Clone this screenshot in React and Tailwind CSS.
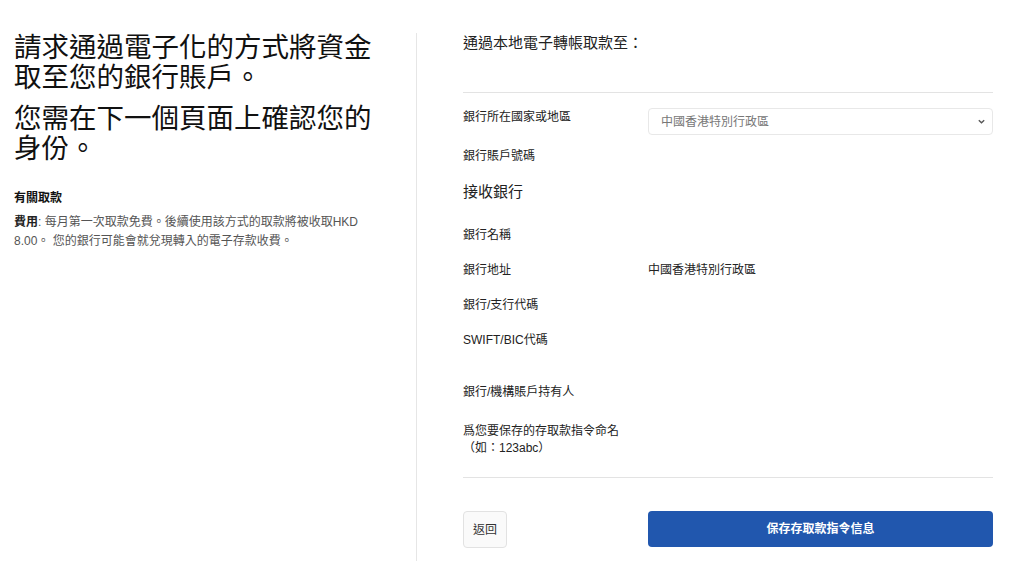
import React from "react";

const FONT = { fontFamily: '"Liberation Sans", "Noto Sans CJK TC", sans-serif' };

function Row({ label, children, className = "" }) {
  return (
    <div className={"flex items-start " + className}>
      <div className="w-[185px] shrink-0 text-[12px] leading-[18px] text-[#222]">{label}</div>
      <div className="flex-1 text-[12px] leading-[18px] text-[#222]">{children}</div>
    </div>
  );
}

export default function App() {
  return (
    <div className="flex w-[1015px] h-[576px] bg-white overflow-hidden" style={FONT}>
      {/* Left column */}
      <div className="w-[416px] shrink-0 pl-[14px] pt-[33px]">
        <h1 className="w-[380px] text-[27.5px] leading-[30px] text-[#111] font-normal">
          請求通過電子化的方式將資金取至您的銀行賬戶。
        </h1>
        <h2 className="w-[380px] mt-[11px] text-[27.5px] leading-[30px] text-[#111] font-normal">
          您需在下一個頁面上確認您的身份。
        </h2>
        <div className="mt-[25px] text-[12px] leading-[18px] font-bold text-[#111]">有關取款</div>
        <p className="mt-[6px] w-[352px] text-[12px] leading-[19px] text-[#555]">
          <span className="font-bold text-[#222]">費用</span>
          <span>: 每月第一次取款免費。後續使用該方式的取款將被收取HKD 8.00。 您的銀行可能會就兌現轉入的電子存款收費。</span>
        </p>
      </div>

      {/* Right column */}
      <div className="mt-[33px] h-[528px] flex-1 border-l border-[#e6e6e6] pl-[46px] pr-[22px] flex flex-col">
        <div className="text-[15px] leading-[20px] text-[#222]">通過本地電子轉帳取款至：</div>
        <div className="mt-[39px] border-t border-[#e3e3e3]" />

        <div className="mt-[15px] flex items-start">
          <div className="w-[185px] shrink-0 text-[12px] leading-[18px] text-[#222]">銀行所在國家或地區</div>
          <div className="flex-1 h-[27px] rounded-[4px] border border-[#e8e8e8] bg-white flex items-center justify-between pl-[12px] pr-[6px]">
            <span className="text-[12px] text-[#777]">中國香港特別行政區</span>
            <svg width="9" height="9" viewBox="0 0 10 10" className="text-[#555]">
              <path d="M2 3.5 L5 6.5 L8 3.5" fill="none" stroke="currentColor" strokeWidth="1.5" />
            </svg>
          </div>
        </div>

        <Row label="銀行賬戶號碼" className="mt-[12px]" />

        <div className="mt-[17px] text-[15px] leading-[20px] text-[#222]">接收銀行</div>

        <Row label="銀行名稱" className="mt-[24px]" />
        <Row label="銀行地址" className="mt-[17px]">中國香港特別行政區</Row>
        <Row label="銀行/支行代碼" className="mt-[17px]" />
        <Row label="SWIFT/BIC代碼" className="mt-[17px]" />
        <Row label="銀行/機構賬戶持有人" className="mt-[34px]" />

        <div className="mt-[22px] text-[12px] leading-[17px] text-[#222]">
          <div>爲您要保存的存取款指令命名</div>
          <div>（如：123abc）</div>
        </div>

        <div className="mt-[20px] border-t border-[#e3e3e3]" />

        <div className="mt-[33px] flex items-start">
          <div className="w-[185px] shrink-0">
            <button className="w-[44px] h-[37px] rounded-[4px] border border-[#e2e2e2] bg-[#fafafa] text-[12px] text-[#333]">
              返回
            </button>
          </div>
          <button className="flex-1 h-[36px] rounded-[4px] bg-[#2157ae] text-white text-[12px] font-bold">
            保存存取款指令信息
          </button>
        </div>
      </div>
    </div>
  );
}
